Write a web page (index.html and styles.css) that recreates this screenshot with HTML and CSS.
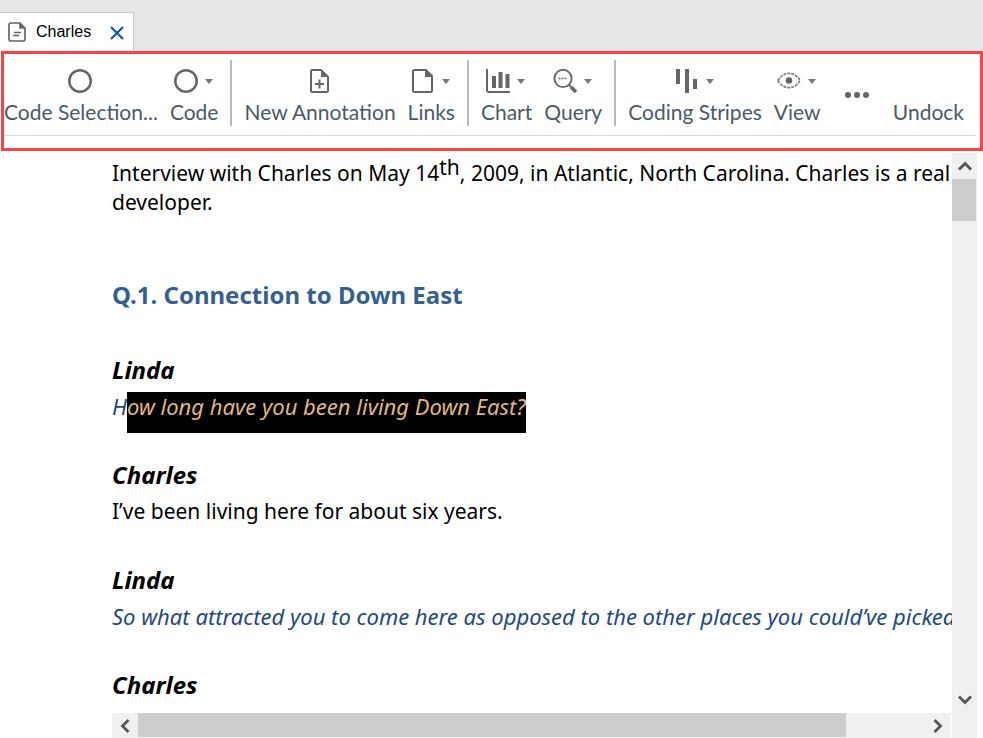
FILE: index.html
```html
<!DOCTYPE html>
<html lang="en">
<head>
<meta charset="utf-8">
<title>Charles</title>
<link rel="stylesheet" href="styles.css">
</head>
<body>
<header class="tabs">
  <div class="tab">
    <svg class="tab-icon" width="18" height="20" viewBox="0 0 18 20"><path d="M2 1h10l5 5v11q0 2-2 2H3q-2 0-2-2V3q0-2 2-2zM12 1v5h5M6 10.500h7M5 13.500h6" fill="none" stroke="#666" stroke-width="1.700"/><path d="M12 1l5 5h-5z" fill="#666"/></svg>
    <span class="tab-name">Charles</span>
    <button class="close" aria-label="Close tab"><svg width="14" height="14" viewBox="0 0 14 14"><path d="M1 1l12 12M13 1L1 13" stroke="#0e5aa0" stroke-width="2.200"/></svg></button>
  </div>
</header>
<nav class="ribbon" aria-label="Document tools">
  <div class="tools">
    <button class="tool"><span class="glyph"><svg width="24" height="24" viewBox="0 0 24 24"><circle cx="12" cy="12" r="10.700" fill="none" stroke="#666" stroke-width="2.500"/></svg></span>Code Selection...</button>
    <button class="tool"><span class="glyph"><svg width="24" height="24" viewBox="0 0 24 24"><circle cx="12" cy="12" r="10.700" fill="none" stroke="#666" stroke-width="2.500"/></svg><i class="caret"></i></span>Code</button>
    <span class="divider"></span>
    <button class="tool"><span class="glyph"><svg width="24" height="24" viewBox="0 0 24 24"><path d="M4.500 1H14l7 7v13.500q0 1.500-1.500 1.500h-14Q4 23 4 21.500v-19Q4 1 5.500 1z" fill="none" stroke="#666" stroke-width="2"/><path d="M14 0l8 8h-8z" fill="#666"/><path d="M12.500 10.500v9M8 15h9" stroke="#666" stroke-width="2"/></svg></span>New Annotation</button>
    <button class="tool"><span class="glyph"><svg width="24" height="24" viewBox="0 0 24 24"><path d="M3.500 1H15l6 6v14.500q0 1.500-1.500 1.500h-16Q2 23 2 21.500v-19Q2 1 3.500 1z" fill="none" stroke="#666" stroke-width="2"/><path d="M14 0l8 8h-8z" fill="#666"/></svg><i class="caret"></i></span>Links</button>
    <span class="divider"></span>
    <button class="tool"><span class="glyph"><svg width="24" height="24" viewBox="0 0 24 24"><path d="M1 0v21q0 2 2 2h21" fill="none" stroke="#666" stroke-width="2"/><path d="M8 7v12M14.500 3v16M21.500 5v14" stroke="#666" stroke-width="4"/></svg><i class="caret"></i></span>Chart</button>
    <button class="tool"><span class="glyph"><svg width="24" height="24" viewBox="0 0 24 24"><circle cx="10" cy="9.500" r="8.600" fill="none" stroke="#666" stroke-width="1.900"/><path d="M5.500 9.500h9" stroke="#666" stroke-width="1.500" stroke-dasharray="2 1"/><path d="M16 16l2 2" stroke="#666" stroke-width="2"/><path d="M18 18l5 5" stroke="#666" stroke-width="3.500"/></svg><i class="caret"></i></span>Query</button>
    <span class="divider"></span>
    <button class="tool"><span class="glyph"><svg width="24" height="24" viewBox="0 0 24 24"><path d="M3 0v15M12 0v24M20 10v10" stroke="#666" stroke-width="4"/></svg><i class="caret"></i></span>Coding Stripes</button>
    <button class="tool"><span class="glyph"><svg width="24" height="24" viewBox="0 0 24 24"><path d="M1 11.500C6 2 18 2 23 11.500C18 21 6 21 1 11.500z" fill="none" stroke="#777" stroke-width="1.600" stroke-dasharray="3 1"/><circle cx="12" cy="11.500" r="3.300" fill="#666"/></svg><i class="caret"></i></span>View</button>
    <button class="more" aria-label="More commands"><svg width="24" height="8" viewBox="0 0 24 8"><g fill="#666"><circle cx="3" cy="4" r="3"/><circle cx="12" cy="4" r="3"/><circle cx="21" cy="4" r="3"/></g></svg></button>
    <button class="tool undock">Undock</button>
  </div>
</nav>
<main class="viewer">
  <article class="doc">
    <p class="intro">Interview with Charles on May 14<sup>th</sup>, 2009, in Atlantic, North Carolina. Charles is a real<br>developer.</p>
    <h1>Q.1. Connection to Down East</h1>
    <section><h2>Linda</h2><p class="question">H<span class="selected">ow long have you been living Down East?</span></p></section>
    <section><h2>Charles</h2><p>I’ve been living here for about six years.</p></section>
    <section><h2>Linda</h2><p class="question">So what attracted you to come here as opposed to the other places you could’ve picked</p></section>
    <section><h2>Charles</h2></section>
  </article>
  <div class="vbar">
    <button class="arrow" aria-label="Scroll up"><svg width="14" height="10" viewBox="0 0 14 10"><path d="M1 8.500l6-6 6 6" fill="none" stroke="#555" stroke-width="2.800"/></svg></button>
    <div class="vthumb"></div>
    <button class="arrow end" aria-label="Scroll down"><svg width="14" height="10" viewBox="0 0 14 10"><path d="M1 1.500l6 6 6-6" fill="none" stroke="#555" stroke-width="2.800"/></svg></button>
  </div>
  <div class="hbar">
    <button class="arrow" aria-label="Scroll left"><svg width="10" height="14" viewBox="0 0 10 14"><path d="M8.500 1l-6 6 6 6" fill="none" stroke="#555" stroke-width="2.800"/></svg></button>
    <div class="htrack"><div class="hthumb"></div></div>
    <button class="arrow" aria-label="Scroll right"><svg width="10" height="14" viewBox="0 0 10 14"><path d="M1.500 1l6 6-6 6" fill="none" stroke="#555" stroke-width="2.800"/></svg></button>
  </div>
  <div class="corner"></div>
</main>
</body>
</html>
```
FILE: styles.css
```css
* { box-sizing: border-box; }
body {
  margin: 0;
  height: 100vh;
  display: flex;
  flex-direction: column;
  overflow: hidden;
  background: #fff;
  font-family: Lato, sans-serif;
}
button { border: 0; padding: 0; background: none; font: inherit; color: inherit; }
svg { display: block; flex: none; }

.tabs { display: flex; background: #e6e7e8; padding-top: 12px; }
.tab {
  display: flex;
  align-items: center;
  height: 39px;
  padding: 0 9px 0 8px;
  background: #fff;
  border-top: 1px solid #c8c8c8;
  border-right: 1px solid #c8c8c8;
}
.tab-name { margin: 0 19px 0 10px; font: 16px "Liberation Sans", sans-serif; color: #000; }
.close { padding-top: 2px; }

.ribbon { flex: none; height: 100px; margin-left: 1px; border: 3px solid #fc4343; }
.tools {
  display: flex;
  gap: 12px;
  height: 82px;
  margin-right: 4px;
  padding: 6px 12px 0 0;
  border-bottom: 1px solid #d4d6d8;
  color: #4d5965;
  font-size: 21px;
}
.tool {
  display: flex;
  flex-direction: column;
  align-items: center;
  flex: none;
  height: 70px;
  padding-top: 9px;
  line-height: 28px;
  white-space: nowrap;
}
.glyph { display: flex; align-items: center; gap: 7px; height: 24px; margin: 0 2px 5px 0; }
.caret { border: 4px solid transparent; border-top: 5px solid #777; border-bottom: 0; }
.divider { flex: none; width: 2px; height: 66px; background: #b3b8c4; }
.more { margin: 0 12px; height: 70px; }
.undock { margin-left: auto; padding-top: 38px; }

.viewer {
  flex: 1;
  min-height: 0;
  display: grid;
  grid-template-columns: minmax(0, 1fr) 25px;
  grid-template-rows: minmax(0, 1fr) 25px;
  margin: 2px 6px 0 112px;
}
.doc { overflow: hidden; padding-top: 6px; font-family: "Noto Sans", sans-serif; font-size: 21px; line-height: 29px; color: #000; white-space: nowrap; }
.doc p, .doc h1, .doc h2 { margin: 0; }
.doc sup { font-size: 21px; line-height: 0; vertical-align: 6px; }
.doc h1 { margin: 61px 0 41px; font-size: 24px; line-height: 34px; color: #365f91; }
.doc section { height: 75px; margin-bottom: 30px; }
.doc h2 { margin-bottom: 5px; font-size: 24px; line-height: 34px; font-style: italic; }
.doc .question { color: #1f497d; font-size: 22px; font-style: italic; }
.selected { display: inline-block; height: 41px; background: #000; color: #e0b682; vertical-align: top; }

.vbar { display: flex; flex-direction: column; background: #f0f0f0; }
.arrow { display: grid; place-items: center; flex: none; width: 25px; height: 26px; }
.vthumb { height: 42px; margin-right: 1px; background: #cdcdcd; }
.end { margin-top: auto; }
.hbar { display: flex; margin-right: 1px; background: #f0f0f0; }
.hbar .arrow { width: 26px; height: 25px; }
.htrack { flex: 1; }
.hthumb { width: 90%; height: 24px; background: #cdcdcd; }
.corner { background: #f0f0f0; }
```
